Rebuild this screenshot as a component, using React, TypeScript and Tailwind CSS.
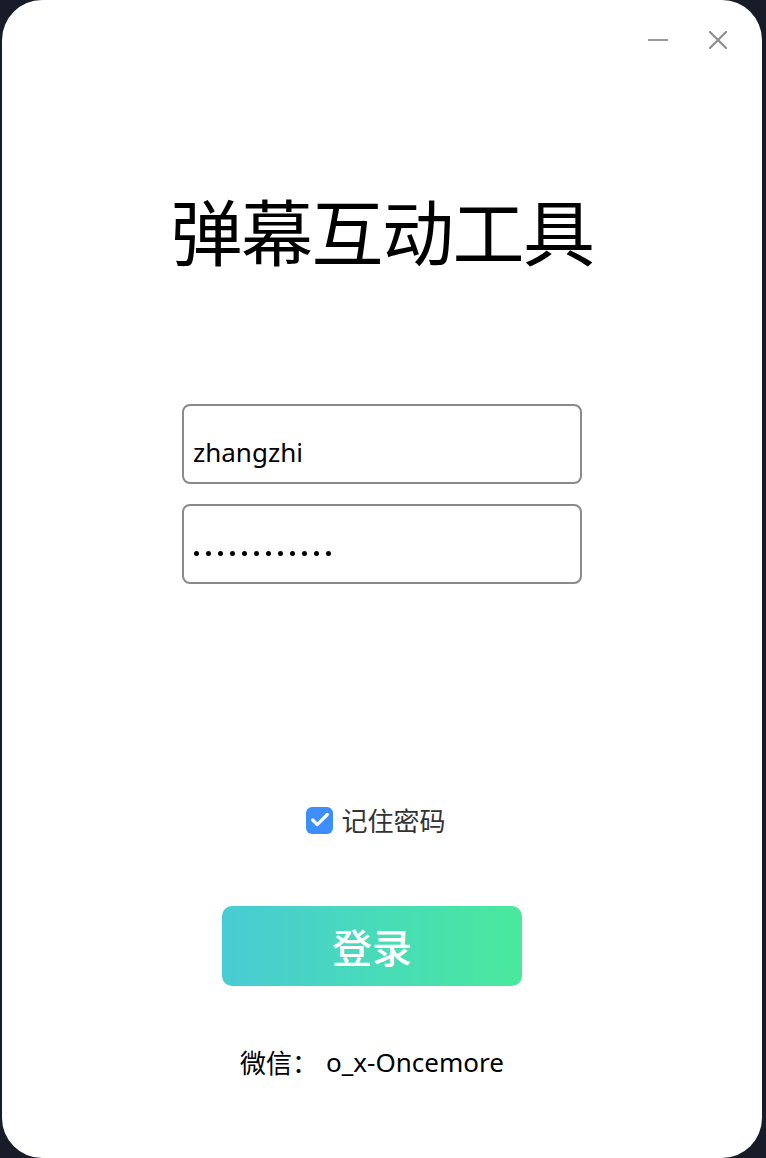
import { Check } from "lucide-react"

const cjk = "font-['PingFang_SC','Noto_Sans_CJK_SC',sans-serif]"

export default function App() {
  return (
    <div className="flex h-[1158px] w-[766px] bg-[#181b28] pl-[2px] pr-[4px]">
      <div className={`flex h-full w-[760px] flex-col items-center rounded-[40px] bg-white ${cjk}`}>
        {/* window controls */}
        <div className="flex w-full items-center justify-end gap-[41px] pr-[35px] pt-[31px]">
          <div className="h-[2px] w-[20px] bg-[#9a9a9a]" />
          <svg width="18" height="18" viewBox="0 0 18 18" className="text-[#8f8f8f]">
            <path d="M1 1L17 17M17 1L1 17" stroke="currentColor" strokeWidth="2.2" strokeLinecap="round" />
          </svg>
        </div>

        <h1 className="mt-[144px] text-[72px] leading-[72px] font-normal tracking-[-1.5px] text-black">
          弹幕互动工具
        </h1>

        <div className="mt-[139px] flex flex-col gap-[20px]">
          <div className="flex h-[80px] w-[400px] items-end rounded-[8px] border-2 border-[#8a8a8a] px-[9px] pb-[13px]">
            <span className="font-['Noto_Sans',sans-serif] text-[26px] leading-[34px] text-black">zhangzhi</span>
          </div>
          <div className="flex h-[80px] w-[400px] items-end gap-[7px] rounded-[8px] border-2 border-[#8a8a8a] px-[10px] pb-[26px]">
            {Array.from({ length: 12 }).map((_, i) => (
              <span key={i} className="h-[5px] w-[5px] rounded-full bg-black" />
            ))}
          </div>
        </div>

        <div className="mr-[12px] mt-[220px] flex h-[32px] items-center gap-[8px]">
          <div className="flex h-[27px] w-[27px] items-center justify-center rounded-[6px] bg-[#3d8dfb]">
            <Check className="h-[22px] w-[22px] text-white" strokeWidth={3.5} />
          </div>
          <span className="text-[26px] leading-[32px] text-[#333333]">记住密码</span>
        </div>

        <button className="mr-[20px] mt-[70px] flex h-[80px] w-[300px] items-center justify-center rounded-[10px] bg-gradient-to-r from-[#49cbd3] to-[#49e99c] text-[40px] font-medium text-white">
          登录
        </button>

        <div className="mr-[20px] mt-[60px] flex items-center text-[26px] leading-[32px] text-black">
          <span>微信：</span>
          <span className="ml-[8px] font-['Noto_Sans',sans-serif]">o_x-Oncemore</span>
        </div>
      </div>
    </div>
  )
}
